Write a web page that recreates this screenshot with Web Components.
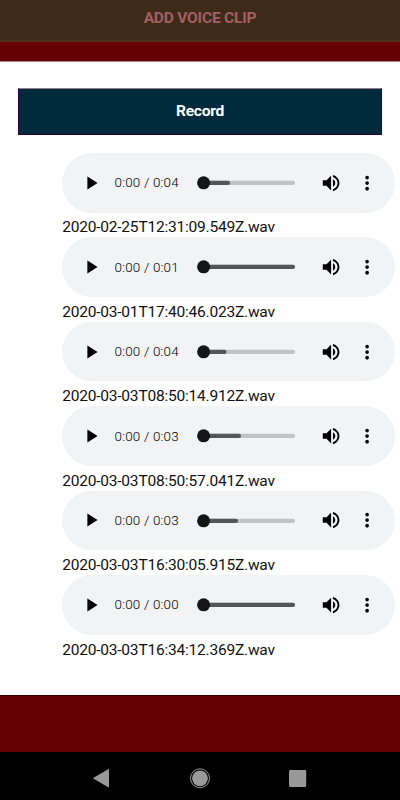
<!DOCTYPE html>
<html lang="en">
<head>
<meta charset="utf-8">
<title>Add voice clip</title>
<style>
html, body { margin: 0; height: 100%; }
body { font-family: Roboto, "Liberation Sans", sans-serif; background: #600; overflow: hidden; }
</style>
</head>
<body>
<voice-app></voice-app>
<script>
class BaseElement extends HTMLElement {
  connectedCallback() {
    if (!this.shadowRoot) this.attachShadow({ mode: 'open' }).innerHTML = this.render();
  }
}
customElements.define('app-header', class extends BaseElement {
  render() {
    return `<style>
      :host { display: block; box-sizing: border-box; height: 42px; background: #3d2b17; border-bottom: 2px solid #49301a;
        color: #a55e64; font-size: 15.56px; letter-spacing: -.22px; font-weight: 700; line-height: 18px; padding-top: 8.5px; text-align: center; }
    </style><slot></slot>`;
  }
});
customElements.define('record-button', class extends BaseElement {
  render() {
    return `<style>
      :host { display: block; }
      button { display: block; box-sizing: border-box; width: 100%; height: 47px; margin: 0; padding: 0 0 2px; background: #002b3d;
        border: 1px solid #2c0038; border-top-color: #93808f; border-radius: 0; color: #fff; font: 700 15.56px Roboto, sans-serif; letter-spacing: -.25px; }
    </style><button type="button"><slot></slot></button>`;
  }
});
customElements.define('audio-player', class extends BaseElement {
  render() {
    const buffered = this.getAttribute('buffered');
    return `<style>
      :host { display: flex; align-items: center; box-sizing: border-box; width: 333.3px; height: 59.6px; border-radius: 30px;
        background: #f1f3f4; padding-left: 17.8px; color: #222; }
      svg { display: block; flex: none; }
      .time { width: 65px; margin-left: 12.4px; font-size: 13.4px; letter-spacing: .2px; white-space: nowrap; font-weight: 300; color: #000; }
      .track { margin-left: 17px; }
      .vol { margin-left: 25.7px; }
      .more { margin-left: 13.2px; }
    </style>
    <svg width="22.2" height="22.2" viewBox="0 0 24 24"><path fill="#000" d="M8 5v14l11-7z"/></svg>
    <span class="time">0:00 / ${this.getAttribute('duration')}</span>
    <svg class="track" width="98" height="14" viewBox="0 0 98 14">
      <rect x="5" y="4.7" width="93" height="4.2" rx="2" fill="#c1c2c3"/>
      <rect x="5" y="4.7" width="${buffered}" height="4.2" rx="2" fill="#545556"/>
      <circle cx="6.6" cy="6.8" r="6.5" fill="#151515" />
    </svg>
    <svg class="vol" width="22.2" height="22.2" viewBox="0 0 24 24"><path fill="#000" d="M3 9v6h4l5 5V4L7 9H3zm13.5 3c0-1.77-1.02-3.29-2.5-4.03v8.05c1.48-.73 2.5-2.25 2.5-4.02zM14 3.23v2.06c2.89.86 5 3.54 5 6.71s-2.11 5.85-5 6.71v2.06c4.01-.91 7-4.49 7-8.77s-2.99-7.86-7-8.77z"/></svg>
    <svg class="more" width="22.2" height="22.2" viewBox="0 0 24 24"><path fill="#000" d="M12 8c1.1 0 2-.9 2-2s-.9-2-2-2-2 .9-2 2 .9 2 2 2zm0 2c-1.1 0-2 .9-2 2s.9 2 2 2 2-.9 2-2-.9-2-2-2zm0 6c-1.1 0-2 .9-2 2s.9 2 2 2 2-.9 2-2-.9-2-2-2z"/></svg>`;
  }
});
customElements.define('voice-clip', class extends BaseElement {
  render() {
    return `<style>
      :host { display: block; height: 84.44px; }
      .name { font-size: 15.56px; letter-spacing: -.23px; line-height: 18px; padding-top: 5.8px; color: #111; white-space: nowrap; }
    </style>
    <audio-player duration="${this.getAttribute('duration')}" buffered="${this.getAttribute('buffered')}"></audio-player>
    <div class="name"><slot></slot></div>`;
  }
});
customElements.define('system-nav', class extends BaseElement {
  render() {
    return `<style>
      :host { display: grid; grid-template-columns: repeat(3, 98px); justify-content: center; align-items: center; justify-items: center;
        box-sizing: border-box; height: 48px; background: #000; padding-top: 4px; }
      svg { display: block; }
    </style>
    <svg width="22" height="22" viewBox="0 0 22 22"><path d="M2.6 11.2 17.5 2.5v17.4z" fill="#999" stroke="#999" stroke-linejoin="round"/></svg>
    <svg width="22" height="22" viewBox="0 0 22 22"><circle cx="11" cy="11.3" r="9.5" fill="none" stroke="#999" stroke-width="1"/><circle cx="11" cy="11.3" r="7.9" fill="#999"/></svg>
    <svg width="22" height="22" viewBox="0 0 22 22"><rect x="2" y="2.9" width="17.2" height="17.2" rx="1.3" fill="#999"/></svg>`;
  }
});
customElements.define('voice-app', class extends BaseElement {
  render() {
    const clips = [
      ['2020-02-25T12:31:09.549Z.wav', '0:04', 28],
      ['2020-03-01T17:40:46.023Z.wav', '0:01', 93],
      ['2020-03-03T08:50:14.912Z.wav', '0:04', 24.5],
      ['2020-03-03T08:50:57.041Z.wav', '0:03', 39],
      ['2020-03-03T16:30:05.915Z.wav', '0:03', 36],
      ['2020-03-03T16:34:12.369Z.wav', '0:00', 93]
    ];
    return `<style>
      :host { display: flex; flex-direction: column; height: 800px; width: 400px; background: #600; }
      main { margin-top: 19px; height: 635px; box-sizing: border-box; background: #fff; padding: 26px 0 0 18px; border-top: 1px solid #a88; border-bottom: 1px solid #300; }
      record-button { width: 364px; }
      .list { margin: 18px 0 0 44.2px; }
      system-nav { margin-top: auto; }
    </style>
    <app-header>ADD VOICE CLIP</app-header>
    <main>
      <record-button>Record</record-button>
      <div class="list">${clips.map(c => `<voice-clip duration="${c[1]}" buffered="${c[2]}">${c[0]}</voice-clip>`).join('')}</div>
    </main>
    <system-nav></system-nav>`;
  }
});
</script>
</body>
</html>
